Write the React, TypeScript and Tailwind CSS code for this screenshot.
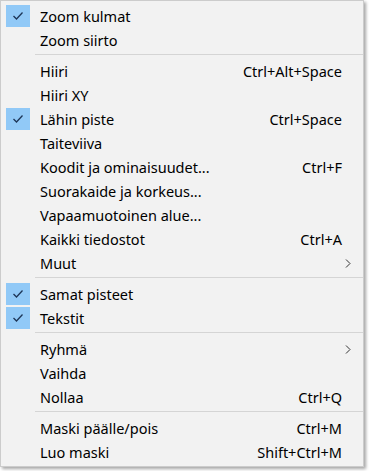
import React from 'react';

type Item =
  | { sep: true }
  | { sep?: false; label: string; shortcut?: string; checked?: boolean; sub?: boolean };

const items: Item[] = [
  { label: 'Zoom kulmat', checked: true },
  { label: 'Zoom siirto' },
  { sep: true },
  { label: 'Hiiri', shortcut: 'Ctrl+Alt+Space' },
  { label: 'Hiiri XY' },
  { label: 'Lähin piste', shortcut: 'Ctrl+Space', checked: true },
  { label: 'Taiteviiva' },
  { label: 'Koodit ja ominaisuudet...', shortcut: 'Ctrl+F' },
  { label: 'Suorakaide ja korkeus...' },
  { label: 'Vapaamuotoinen alue...' },
  { label: 'Kaikki tiedostot', shortcut: 'Ctrl+A' },
  { label: 'Muut', sub: true },
  { sep: true },
  { label: 'Samat pisteet', checked: true },
  { label: 'Tekstit', checked: true },
  { sep: true },
  { label: 'Ryhmä', sub: true },
  { label: 'Vaihda' },
  { label: 'Nollaa', shortcut: 'Ctrl+Q' },
  { sep: true },
  { label: 'Maski päälle/pois', shortcut: 'Ctrl+M' },
  { label: 'Luo maski', shortcut: 'Shift+Ctrl+M' },
];

const Check = () => (
  <div className="w-[24px] h-[22px] bg-[#91c9f7] flex items-center justify-center">
    <svg width="12" height="10" viewBox="0 0 12 10">
      <polyline points="1.5,5 4.5,8 10.5,1.5" fill="none" stroke="#1d3557" strokeWidth="1.3" />
    </svg>
  </div>
);

const Chevron = () => (
  <svg width="6" height="9" viewBox="0 0 6 9">
    <polyline points="1,0.5 5,4.5 1,8.5" fill="none" stroke="#333" strokeWidth="1" />
  </svg>
);

export default function App() {
  return (
    <div className="w-[369px] h-[471px] bg-white">
      <div
        className="w-[364px] h-[467px] bg-[#f2f2f2] border border-[#cccccc] shadow-[2px_2px_3px_rgba(0,0,0,0.35)] pt-[3px] text-black text-[14.5px]"
        style={{ fontFamily: '"Noto Sans", "Open Sans", sans-serif' }}
      >
        {items.map((it, i) =>
          it.sep ? (
            <div key={i} className="h-[7px] pl-[34px] pt-[2px]">
              <div className="h-px bg-[#d5d5d5]" />
            </div>
          ) : (
            <div key={i} className="h-[24px] flex items-center">
              <div className="w-[39px] pl-[5px] flex items-center">{it.checked && <Check />}</div>
              <div className="flex-1 leading-none">{it.label}</div>
              {it.shortcut && <div className="leading-none pr-[21px]">{it.shortcut}</div>}
              {it.sub && (
                <div className="pr-[12px] flex items-center">
                  <Chevron />
                </div>
              )}
            </div>
          )
        )}
      </div>
    </div>
  );
}
